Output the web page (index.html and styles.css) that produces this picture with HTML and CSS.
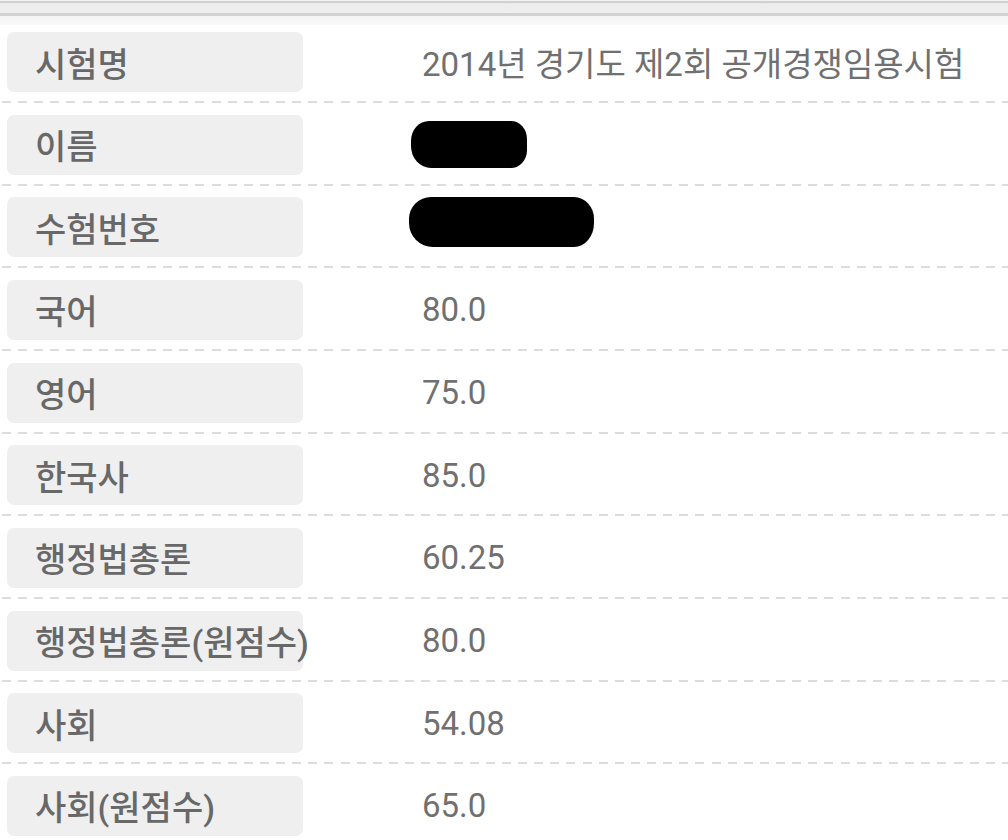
FILE: index.html
```html
<!DOCTYPE html>
<html lang="ko">
<head>
<meta charset="utf-8">
<title>시험 결과</title>
<link rel="stylesheet" href="styles.css">
</head>
<body>
<div class="topbar"></div>
<div class="list">
  <div class="row">
    <div class="cells"><div class="label">시험명</div><div class="value">2014년 경기도 제2회 공개경쟁임용시험</div></div>
    <div class="sep"></div>
  </div>
  <div class="row">
    <div class="cells"><div class="label">이름</div><div class="value"><span class="blob blob-name"></span></div></div>
    <div class="sep"></div>
  </div>
  <div class="row">
    <div class="cells"><div class="label">수험번호</div><div class="value"><span class="blob blob-num"></span></div></div>
    <div class="sep"></div>
  </div>
  <div class="row">
    <div class="cells"><div class="label">국어</div><div class="value">80.0</div></div>
    <div class="sep"></div>
  </div>
  <div class="row">
    <div class="cells"><div class="label">영어</div><div class="value">75.0</div></div>
    <div class="sep"></div>
  </div>
  <div class="row">
    <div class="cells"><div class="label">한국사</div><div class="value">85.0</div></div>
    <div class="sep"></div>
  </div>
  <div class="row">
    <div class="cells"><div class="label">행정법총론</div><div class="value">60.25</div></div>
    <div class="sep"></div>
  </div>
  <div class="row">
    <div class="cells"><div class="label">행정법총론(원점수)</div><div class="value">80.0</div></div>
    <div class="sep"></div>
  </div>
  <div class="row">
    <div class="cells"><div class="label">사회</div><div class="value">54.08</div></div>
    <div class="sep"></div>
  </div>
  <div class="row">
    <div class="cells"><div class="label">사회(원점수)</div><div class="value">65.0</div></div>
    <div class="sep"></div>
  </div>
</div>
</body>
</html>
```
FILE: styles.css
```css
html, body {
  margin: 0;
  padding: 0;
  background: #ffffff;
  overflow: hidden;
}
body {
  font-family: Roboto, "Noto Sans CJK KR", "Noto Sans", sans-serif;
  font-size: 33px;
  color: #6e6e6e;
}
.topbar {
  height: 25px;
  background: linear-gradient(to bottom,
    #f2f2f2 0, #f2f2f2 1px,
    #d0d0d0 1px, #d0d0d0 3px,
    #ececec 3px, #efefef 13px,
    #d3d3d3 13px, #d3d3d3 16px,
    #f5f5f5 16px, #f9f9f9 25px);
}
.list {
  padding-top: 7px;
}
.row {
  height: 82.67px;
}
.cells {
  display: flex;
  align-items: center;
  height: 60px;
}
.label {
  box-sizing: border-box;
  width: 296px;
  height: 60px;
  margin-left: 7px;
  padding-left: 28px;
  background: #efefef;
  border-radius: 7px;
  display: flex;
  align-items: center;
  white-space: nowrap;
  font-size: 34px;
  font-weight: 500;
  color: #686868;
}
.value {
  margin-left: 119px;
  display: flex;
  align-items: center;
  height: 60px;
  white-space: nowrap;
  color: #707070;
}
.sep {
  height: 2px;
  margin-top: 9px;
  background: repeating-linear-gradient(90deg,
    transparent 0, transparent 1.87px,
    #dcdcdc 1.87px, #dcdcdc 10.87px,
    transparent 10.87px, transparent 16.13px);
}
.blob {
  display: block;
  background: #000;
}
.blob-name {
  width: 116px;
  height: 47px;
  margin-left: -11px;
  border-radius: 18px 16px 16px 20px / 20px 18px 18px 22px;
}
.blob-num {
  width: 185px;
  height: 50px;
  margin-left: -13px;
  margin-bottom: 10px;
  border-radius: 22px 20px 20px 24px / 22px 22px 24px 24px;
}
```
